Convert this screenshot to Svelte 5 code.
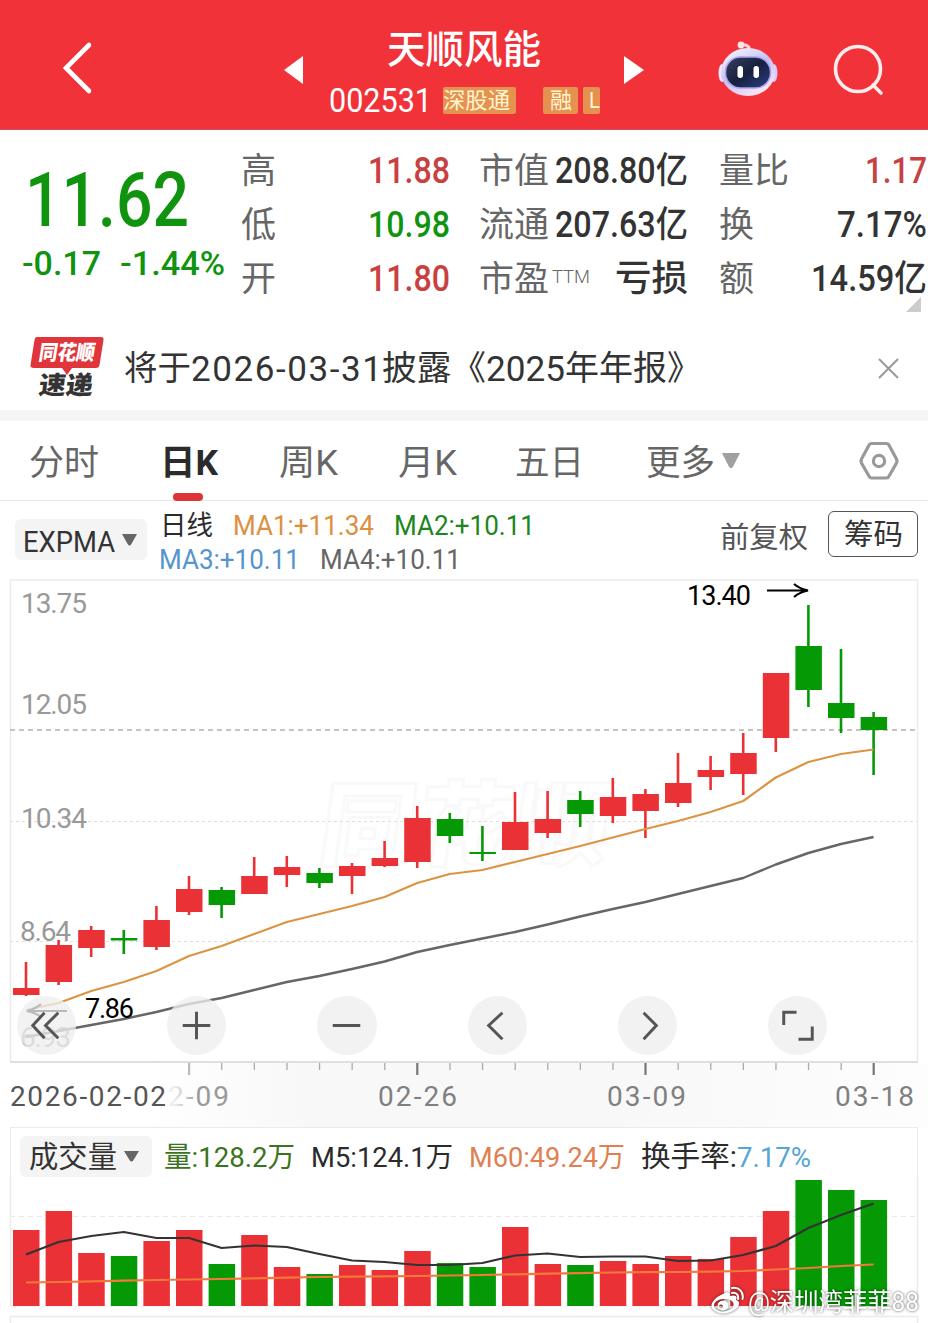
<script>
	const quotes = [
		{
			name: 'price',
			rows: [
				{ label: '高', value: '11.88', w: 82, color: 'red' },
				{ label: '低', value: '10.98', w: 82, color: 'green' },
				{ label: '开', value: '11.80', w: 82, color: 'red' }
			]
		},
		{
			name: 'cap',
			rows: [
				{ label: '市值', value: '208.80亿', w: 133 },
				{ label: '流通', value: '207.63亿', w: 133 },
				{ label: '市盈', sup: 'TTM', value: '亏损', w: 73 }
			]
		},
		{
			name: 'turnover',
			rows: [
				{ label: '量比', value: '1.17', w: 62, color: 'red' },
				{ label: '换', value: '7.17%', w: 90 },
				{ label: '额', value: '14.59亿', w: 116 }
			]
		}
	];

	const tabs = [
		{ text: '分时', w: 70 },
		{ text: '日K', w: 58, active: true },
		{ text: '周K', w: 59 },
		{ text: '月K', w: 59 },
		{ text: '五日', w: 69 },
		{ text: '更多', w: 69, more: true }
	];

	// up, high, body top, body bottom, low, top of the volume bar
	const candles = [
		[1, 962, 988, 995, 996, 1230],
		[1, 940, 945, 982, 985, 1211],
		[1, 926, 930, 948, 957, 1253],
		[0, 930, 938, 940.5, 954, 1256],
		[1, 906, 920, 947, 950, 1241],
		[1, 876, 889, 912, 915, 1230],
		[0, 887, 890, 905, 918, 1264],
		[1, 857, 876, 894, 894, 1235],
		[1, 856, 867, 875, 887, 1267],
		[0, 868, 873, 883, 888, 1274],
		[1, 863, 866, 876, 894, 1265],
		[1, 841, 858, 866, 867, 1270],
		[1, 806, 818, 862, 868, 1251],
		[0, 813, 819, 836, 843, 1263],
		[0, 826, 852, 854, 861, 1267],
		[1, 792, 822, 850, 850, 1227],
		[1, 791, 819, 833, 838, 1264],
		[0, 791, 800, 814, 827, 1265],
		[1, 778, 797, 816, 823, 1261],
		[1, 789, 794, 811, 838, 1264],
		[1, 753, 783, 803, 807, 1256],
		[1, 756, 770, 777, 790, 1259],
		[1, 733, 753, 774, 795, 1237],
		[1, 673, 673, 738, 752, 1211],
		[0, 605, 646, 690, 707, 1180],
		[0, 649, 703, 718, 733, 1190],
		[0, 712, 717, 730, 775, 1200]
	];
	const ma1 = [1010, 1003, 991, 982, 971, 956, 946, 934, 922, 914, 906, 897, 883, 874, 870, 862, 854, 846, 837.5, 829, 821, 812, 801, 777.5, 762, 754, 749.5];
	const ma4 = [1037, 1031, 1025, 1019, 1012, 1004, 998, 990, 982, 976, 969, 961.5, 952, 945, 938.5, 932, 924.5, 916.5, 909, 902, 894, 886, 878, 864.5, 853, 844, 837];
	const m5 = [1254.5, 1242, 1236, 1232, 1238, 1238, 1248, 1245.5, 1247, 1254, 1260.5, 1262, 1265, 1265, 1263, 1255.5, 1253.5, 1257, 1256.5, 1256.5, 1261, 1260.5, 1255, 1246, 1228, 1215, 1203.5];
	const m60 = [1282.5, 1282, 1281.3, 1280.7, 1280, 1279.5, 1279, 1278.3, 1277.7, 1277, 1276.6, 1276.3, 1276, 1275.5, 1275, 1274.3, 1273.7, 1273.2, 1272.5, 1272.2, 1272, 1271.6, 1271, 1269.5, 1268, 1266, 1264.5];

	const cx = (i) => 26 + i * 32.6;
	const line = (ys) => ys.map((y, i) => `${cx(i)},${y}`).join(' ');
	const fill = (up) => (up ? '#ea3135' : '#059a05');
	const ticks = [5, 6, 7, 8, 9, 10, 11, 12, 13, 14, 15, 16, 17, 18, 19, 20, 21, 22, 23, 24, 25, 26];
	const major = [5, 12, 19, 26];
</script>

<!-- one line of text set to an exact width -->
{#snippet fit(text, width, size, adjust = 'spacingAndGlyphs')}
	<svg class="fit" {width} height={size}>
		<text x="0" y={size * 0.86} font-size={size} textLength={width} lengthAdjust={adjust}>{text}</text>
	</svg>
{/snippet}

{#snippet caret(w, h)}
	<svg class="caret" width={w} height={h} viewBox="0 0 16 12" preserveAspectRatio="none"><path d="M0 0h16l-6 10q-2 3-4 0z" /></svg>
{/snippet}

<main>
	<header>
		<svg class="back" width="34" height="56" viewBox="0 0 34 56"><path d="M29 5 6 28l23 23" /></svg>
		<svg class="prev" width="20" height="28" viewBox="0 0 20 28"><path d="M0 14 19 0v28z" /></svg>
		<div class="stock">
			<div class="stock-name">{@render fit('天顺风能', 154, 39)}</div>
			<div class="stock-code">
				{@render fit('002531', 103, 34)}
				<span class="badge wide">{@render fit('深股通', 67, 22)}</span>
				<span class="badge rong">{@render fit('融', 22, 22)}</span>
				<span class="badge cut">{@render fit('L', 11, 22)}</span>
			</div>
		</div>
		<svg class="next" width="20" height="28" viewBox="0 0 20 28"><path d="M20 14 0 0v28z" /></svg>
		<svg class="robot" width="60" height="58" viewBox="0 0 60 58">
			<defs>
				<linearGradient id="head" x1="0" y1="0" x2="0.6" y2="1">
					<stop offset="0" stop-color="#fff" />
					<stop offset="0.55" stop-color="#c3bff5" />
					<stop offset="1" stop-color="#fbe6f2" />
				</linearGradient>
				<linearGradient id="face" x1="0" y1="0" x2="1" y2="1">
					<stop offset="0" stop-color="#39405f" />
					<stop offset="0.5" stop-color="#18203f" />
					<stop offset="1" stop-color="#2b3f86" />
				</linearGradient>
			</defs>
			<path d="M22 5c6-1 10 1 10 7" fill="none" stroke="#ffd0d8" stroke-width="3" />
			<circle cx="23" cy="5" r="3.4" fill="#ffe3e6" />
			<ellipse cx="4" cy="33" rx="3.5" ry="9" fill="#f0e4ff" />
			<ellipse cx="56" cy="33" rx="3.5" ry="9" fill="#d8ccff" />
			<ellipse cx="30" cy="32" rx="27" ry="24" fill="url(#head)" />
			<rect x="7.500" y="17" width="45" height="31" rx="15" fill="url(#face)" stroke="#a9a4ee" stroke-width="1.5" />
			<rect x="19.500" y="26" width="5.5" height="12" rx="2.7" fill="#fff" />
			<rect x="35.500" y="26" width="5.5" height="12" rx="2.7" fill="#fff" />
		</svg>
		<svg class="search" width="52" height="54" viewBox="0 0 52 54"><circle cx="25" cy="26" r="22.5" /><path d="m40 42 8 8" /></svg>
	</header>

	<section class="quote">
		<div class="last green">
			<div class="last-price">{@render fit('11.62', 164, 76)}</div>
			<div class="last-change">
				{@render fit('-0.17', 79, 34)}
				{@render fit('-1.44%', 105, 34)}
			</div>
		</div>
		{#each quotes as col}
			<div class="col {col.name}">
				{#each col.rows as row}
					<div class="row">
						<span class="label">
							{@render fit(row.label, row.label.length * 35, 35)}
							{#if row.sup}<span class="sup">{@render fit(row.sup, 38, 18.5)}</span>{/if}
						</span>
						<span class="value {row.color}">{@render fit(row.value, row.w, 36)}</span>
					</div>
				{/each}
			</div>
		{/each}
		<svg class="corner" width="15" height="15"><path d="M15 0v15H0z" /></svg>
	</section>

	<section class="news">
		<svg class="news-logo" width="76" height="62" viewBox="0 0 76 62">
			<path d="M7 2h64q3 0 2.500 3l-4 25q-.5 3-3.500 3H42l-5 7-5-7H4q-4 0-3.500-3l4-25Q5 2 7 2z" fill="#e0353a" />
			<text transform="translate(8 25) skewX(-9)" font-size="21" font-weight="900" fill="#fff" textLength="56" lengthAdjust="spacingAndGlyphs">同花顺</text>
			<text transform="translate(8 59) skewX(-7)" font-size="25" font-weight="900" fill="#333" textLength="54" lengthAdjust="spacingAndGlyphs">速递</text>
		</svg>
		<div class="news-text">
			{@render fit('将于', 67, 34)}{@render fit('2026-03-31', 191, 35, 'spacing')}{@render fit('披露《', 104, 34)}{@render fit('2025', 79, 35)}{@render fit('年年报》', 136, 34)}
		</div>
		<svg class="close" width="21" height="21"><path d="m1 1 19 19M20 1 1 20" /></svg>
	</section>

	<nav>
		{#each tabs as tab}
			<div class="tab" class:active={tab.active}>
				{@render fit(tab.text, tab.w, 35)}
				{#if tab.more}{@render caret(18, 16)}{/if}
			</div>
		{/each}
		<svg class="setting" width="42" height="42" viewBox="0 0 42 42">
			<path d="M13.500 3.500h15q1.500 0 2.300 1.300L38.500 19q1 2 0 4l-7.700 13.500q-.8 1.500-2.300 1.500h-15q-1.500 0-2.300-1.500L3.500 23q-1-2 0-4l7.700-14.200q.8-1.300 2.300-1.300z" />
			<circle cx="21" cy="21" r="5.6" />
		</svg>
	</nav>

	<section class="indicator">
		<button class="chip">{@render fit('EXPMA', 92, 29)}{@render caret(15, 12)}</button>
		<div class="ma">
			<div class="ma-row">
				<span class="dark">{@render fit('日线', 53, 27)}</span>
				<span class="ma1">{@render fit('MA1:+11.34', 141, 28)}</span>
				<span class="ma2">{@render fit('MA2:+10.11', 141, 28)}</span>
			</div>
			<div class="ma-row">
				<span class="ma3">{@render fit('MA3:+10.11', 141, 28)}</span>
				<span class="ma4">{@render fit('MA4:+10.11', 141, 28)}</span>
			</div>
		</div>
		<span class="adjust">{@render fit('前复权', 88, 29)}</span>
		<button class="chips">{@render fit('筹码', 59, 29)}</button>
	</section>

	<section class="kline">
		<svg width="928" height="548" viewBox="0 579 928 548">
			<defs>
				<linearGradient id="fade"><stop offset="0.1" stop-color="#eee" /><stop offset="0.5" stop-color="#999" /></linearGradient>
				<linearGradient id="band" x1="0" y1="0" x2="1" y2="0">
					<stop offset="0" stop-color="#fff" />
					<stop offset="0.2" stop-color="#f8f8f8" />
					<stop offset="0.6" stop-color="#f8f8f8" />
					<stop offset="1" stop-color="#fdfdfd" />
				</linearGradient>
			</defs>
			<rect x="150" y="1063" width="778" height="64" fill="url(#band)" />
			<text transform="translate(316 858) skewX(-8)" font-size="92" font-weight="900" fill="#fff" stroke="#f9f9f9" stroke-width="3" textLength="290" lengthAdjust="spacingAndGlyphs">同花顺</text>
			<path class="frame" d="M10.500 1062V580h907v482" />
			<path d="M10 1062h908" stroke="#dfdfdf" stroke-width="2" />
			<path d="M10 821.500h907M10 941.500h907" stroke="#dedede" stroke-dasharray="3 3" />
			<path d="M10 730h907" stroke="#b9b0a3" stroke-width="1.5" stroke-dasharray="5 4" />

			<g class="scale">
				<text x="21" y="613" textLength="66">13.75</text>
				<text x="21" y="713.5" textLength="66">12.05</text>
				<text x="21" y="828" textLength="66">10.34</text>
				<text x="20" y="941" textLength="51">8.64</text>
				<text x="20" y="1047" textLength="51">6.93</text>
			</g>

			{#each candles as [up, high, top, bottom, low], i}
				<rect x={cx(i) - 1.3} y={high} width="2.6" height={low - high} fill={fill(up)} />
				<rect x={cx(i) - 13} y={top} width="26.5" height={bottom - top} fill={fill(up)} />
			{/each}
			<polyline points={line(ma1)} stroke="#dc9442" stroke-width="2.2" />
			<polyline points={line(ma4)} stroke="#666" stroke-width="2.4" />

			<g class="mark">
				<text x="687" y="605" textLength="64">13.40</text>
				<path d="M767 590.500h41M794 584q6 5 14 6.500q-8 1.500-14 6.500" />
				<text x="85" y="1017.5" textLength="49">7.86</text>
				<path d="M67 1011H27M41 1004q-6 5-14 7q8 1.500 14 6" />
			</g>

			{#each ticks as i}
				<rect x={cx(i) - (major.includes(i) ? 1 : 0.5)} y="1063" width={major.includes(i) ? 2.2 : 1.3} height={major.includes(i) ? 12 : 7} fill={i == 5 ? '#bbb' : major.includes(i) ? '#777' : '#aaa'} />
			{/each}
			<g class="dates">
				<text x="10" y="1106" textLength="156" fill="#555">2026-02-02</text>
				<text x="168" y="1106" textLength="61" fill="url(#fade)">2-09</text>
				<text x="378" y="1106" textLength="79">02-26</text>
				<text x="607" y="1106" textLength="79">03-09</text>
				<text x="835" y="1106" textLength="79">03-18</text>
			</g>
		</svg>
		<div class="tools">
			<button><svg viewBox="-30 -30 60 60"><path d="M-2-13-14 0-2 13M12-13-1 0l13 13" /></svg></button>
			<button><svg viewBox="-30 -30 60 60"><path d="M-14 0h28M0-14v28" /></svg></button>
			<button><svg viewBox="-30 -30 60 60"><path d="M-14 0h28" /></svg></button>
			<button><svg viewBox="-30 -30 60 60"><path d="M5-13-9 0 5 14" /></svg></button>
			<button><svg viewBox="-30 -30 60 60"><path d="M-4-13 9 0-4 14" /></svg></button>
			<button><svg viewBox="-30 -30 60 60"><path d="M-1-13.500h-13v13M1 14h14V1" /></svg></button>
		</div>
	</section>

	<section class="volume">
		<div class="volume-head">
			<button class="chip">{@render fit('成交量', 88, 29.5)}{@render caret(15, 11)}</button>
			<span class="vol">{@render fit('量:128.2万', 131, 28.5)}</span>
			<span class="dark">{@render fit('M5:124.1万', 142, 28.5)}</span>
			<span class="m60">{@render fit('M60:49.24万', 156, 28.5)}</span>
			<span class="dark">{@render fit('换手率:', 96, 29)}</span>
			<span class="rate">{@render fit('7.17%', 74, 28.5)}</span>
		</div>
		<svg width="928" height="146" viewBox="0 1177 928 146">
			<path d="M10 1216.500h907" stroke="#e8e8e8" stroke-dasharray="5 4" />
			<path d="M10 1306h907" stroke="#f0f0f0" />
			{#each candles as [up, , , , , top], i}
				<rect x={cx(i) - 13} y={top} width="26.5" height={1306 - top} fill={fill(up)} />
			{/each}
			<polyline points={line(m5)} stroke="#333" stroke-width="2.2" />
			<polyline points={line(m60)} stroke="#f2783c" stroke-width="2.2" />
			<path class="frame" d="M10.500 1177v129M917.500 1177v129M10.500 1323v-6.500h907v6.500" />
		</svg>
		<div class="author">
			<svg width="33" height="30" viewBox="0 0 33 30">
				<path fill="#fff" fill-rule="evenodd" d="M12 8c4-3 8-2 7 2 5-1.500 8 0 6 4 4 1 4 5 1 8-5 5-14 7-20 4C-1 23-1 18 4 13c2-2 5-4 8-5zm1 5c-6 0-10 3-10 6.500S7 26 13 25.500s10-4 9.500-7.500-4-5-9.500-5z" />
				<path fill="#fff" fill-rule="evenodd" d="M12 14.500a5.500 5 0 1 0 .1 10 5.500 5 0 0 0-.1-10zm-2 4a2 2 0 1 1 0 4 2 2 0 0 1 0-4z" />
				<path fill="none" stroke="#fff" stroke-width="2" stroke-linecap="round" d="M21 7c4-1 7 2 6 6M21 2c7-1.500 12 4 10.500 11" />
			</svg>
			{@render fit('@深圳湾菲菲88', 171, 25)}
		</div>
	</section>
</main>

<style>
	:global(body) {
		margin: 0;
		overflow: hidden;
	}

	main {
		width: 928px;
		height: 1323px;
		overflow: hidden;
		background: #fff;
		color: #333;
		font-family: Roboto, 'Noto Sans CJK SC', sans-serif;
	}
	svg {
		display: block;
		flex: none;
	}
	.fit {
		overflow: visible;
	}
	.fit text {
		fill: currentColor;
	}
	button {
		border: 0;
		padding: 0;
		font: inherit;
		color: inherit;
	}
	.red {
		color: #c8403f;
	}
	.green {
		color: #109410;
	}
	.dark {
		color: #2b2b2b;
	}

	header {
		display: flex;
		box-sizing: border-box;
		height: 130px;
		background: #f13239;
		color: #fff;
		border-bottom: 1px solid #c9525a;
	}
	.back {
		margin: 40px 0 0 60px;
		fill: none;
		stroke: #fff;
		stroke-width: 4.6;
		stroke-linecap: round;
	}
	.prev {
		margin: 56px 0 0 190px;
		fill: #fff;
	}
	.next {
		margin: 56px 0 0 23px;
		fill: #fff;
	}
	.stock {
		width: 272px;
		margin: 29px 0 0 25px;
	}
	.stock-name {
		margin-left: 58px;
		font-weight: 500;
	}
	.stock-code {
		display: flex;
		align-items: center;
		margin-top: 15px;
	}
	.badge {
		display: flex;
		justify-content: center;
		align-items: center;
		height: 27px;
		border-radius: 2px;
		background: #e5914f;
		color: #fff6d0;
	}
	.wide {
		width: 73px;
		margin-left: 11px;
		justify-content: flex-start;
	}
	.rong {
		width: 35px;
		margin-left: 27px;
	}
	.cut {
		width: 17px;
		margin-left: 5px;
		justify-content: flex-end;
		overflow: hidden;
	}
	.robot {
		margin: 40px 0 0 74px;
	}
	.search {
		margin: 43px 0 0 55px;
		fill: none;
		stroke: #ffecec;
		stroke-width: 3.6;
		stroke-linecap: round;
	}

	.quote {
		position: relative;
		display: flex;
		height: 196px;
	}
	.last {
		width: 241px;
		box-sizing: border-box;
		padding: 31px 0 0 22px;
		font-weight: 500;
	}
	.last-price {
		margin-left: 3px;
	}
	.last-change {
		display: flex;
		gap: 19px;
		margin-top: 9px;
	}
	.col {
		padding-top: 13px;
	}
	.price {
		width: 209px;
	}
	.cap {
		width: 209px;
		margin-left: 29px;
	}
	.turnover {
		width: 208px;
		margin-left: 31px;
	}
	.row {
		display: flex;
		justify-content: space-between;
		align-items: center;
		height: 54px;
	}
	.label {
		display: flex;
		color: #666;
	}
	.sup {
		margin: 6px 0 0 3px;
		font-weight: 300;
	}
	.value {
		font-weight: 500;
	}
	.corner {
		position: absolute;
		right: 7px;
		top: 167px;
		fill: #ccc;
	}

	.news {
		display: flex;
		align-items: center;
		height: 84px;
		border-bottom: 11px solid #f5f5f5;
	}
	.news-logo {
		margin: -4px 0 0 30px;
	}
	.news-text {
		display: flex;
		align-items: center;
		width: 577px;
		margin-left: 18px;
	}
	.close {
		margin-left: 177px;
		fill: none;
		stroke: #999;
		stroke-width: 2;
	}

	nav {
		display: flex;
		align-items: center;
		box-sizing: border-box;
		height: 80px;
		padding-left: 29px;
		border-bottom: 1px solid #e8e8e8;
	}
	.tab {
		position: relative;
		display: flex;
		align-items: center;
		gap: 7px;
		padding-top: 3px;
		margin-right: 61px;
		color: #666;
	}
	.tab:nth-child(3) {
		margin-right: 60px;
	}
	.tab:nth-child(4) {
		margin-right: 58px;
	}
	.tab:nth-child(5) {
		margin-right: 62px;
	}
	.tab:nth-child(6) {
		margin-right: 118px;
	}
	.tab .caret {
		margin-top: -3px;
		fill: #a0a0a0;
	}
	.active {
		color: #2b2b2b;
		font-weight: 700;
	}
	.active::after {
		content: '';
		position: absolute;
		left: 13px;
		bottom: -21px;
		width: 30px;
		height: 8px;
		border-radius: 4px;
		background: #dc3437;
	}
	.setting {
		fill: none;
		stroke: #999;
		stroke-width: 3.2;
	}

	.indicator {
		display: flex;
		height: 78px;
	}
	.chip {
		display: flex;
		align-items: center;
		box-sizing: border-box;
		gap: 7px;
		width: 132px;
		height: 41px;
		padding-left: 9px;
		border-radius: 6px;
		background: #f4f4f4;
	}
	.chip .caret {
		fill: #666;
	}
	.indicator .chip {
		margin: 18px 0 0 15px;
		padding-left: 8px;
	}
	.indicator .chip .fit {
		margin-top: 3px;
	}
	.ma {
		width: 560px;
		margin: 10px 0 0 12px;
	}
	.ma-row {
		display: flex;
		align-items: center;
		gap: 20px;
		height: 28px;
		margin-bottom: 6px;
	}
	.ma-row .dark {
		margin-left: 1px;
	}
	.ma1 {
		color: #dc9040;
	}
	.ma2 {
		color: #1d861d;
	}
	.ma3 {
		color: #5595cf;
	}
	.ma4 {
		color: #666;
	}
	.adjust {
		margin: 22px 0 0 1px;
		color: #555;
	}
	.chips {
		display: flex;
		align-items: center;
		justify-content: center;
		box-sizing: border-box;
		width: 90px;
		height: 46px;
		margin: 10px 0 0 20px;
		padding-top: 1px;
		border: 1px solid #555;
		border-radius: 6px;
		background: #fff;
	}

	.kline {
		position: relative;
		height: 548px;
	}
	.frame {
		fill: none;
		stroke: #ebebeb;
		stroke-width: 1.5;
	}
	polyline {
		fill: none;
		stroke-linejoin: round;
	}
	.scale text {
		font-size: 28px;
		fill: #999;
	}
	.mark text {
		font-size: 27px;
		fill: #000;
	}
	.mark path {
		fill: none;
		stroke: #000;
		stroke-width: 2.2;
	}
	.dates text {
		font-size: 28px;
	}
	.dates text:nth-child(n + 3) {
		fill: #808080;
	}
	.tools {
		position: absolute;
		left: 17px;
		top: 417px;
		display: flex;
		gap: 91px;
	}
	.tools button {
		width: 59.2px;
		height: 59px;
		border-radius: 50%;
		background: rgba(238, 238, 238, 0.78);
	}
	.tools svg {
		width: 59px;
		height: 59px;
		fill: none;
		stroke: #555;
		stroke-width: 3;
	}

	.volume {
		position: relative;
	}
	.volume-head {
		display: flex;
		align-items: center;
		box-sizing: border-box;
		width: 908px;
		height: 50px;
		margin-left: 10px;
		padding: 7px 0 0 9px;
		border: 1px solid #ebebeb;
		border-bottom: 0;
	}
	.volume-head .chip {
		margin-right: 12px;
	}
	.volume-head .chip .fit {
		margin-top: 2px;
	}
	.volume-head .dark,
	.volume-head .m60 {
		margin-left: 16px;
	}
	.vol {
		color: #3b7320;
	}
	.m60 {
		color: #e08052;
	}
	.rate {
		color: #55a5d5;
	}
	.author {
		position: absolute;
		right: 9px;
		bottom: 7px;
		display: flex;
		align-items: center;
		gap: 4px;
		color: #fff;
		filter: drop-shadow(0 0 1.5px rgba(0, 0, 0, 0.65));
	}
</style>
